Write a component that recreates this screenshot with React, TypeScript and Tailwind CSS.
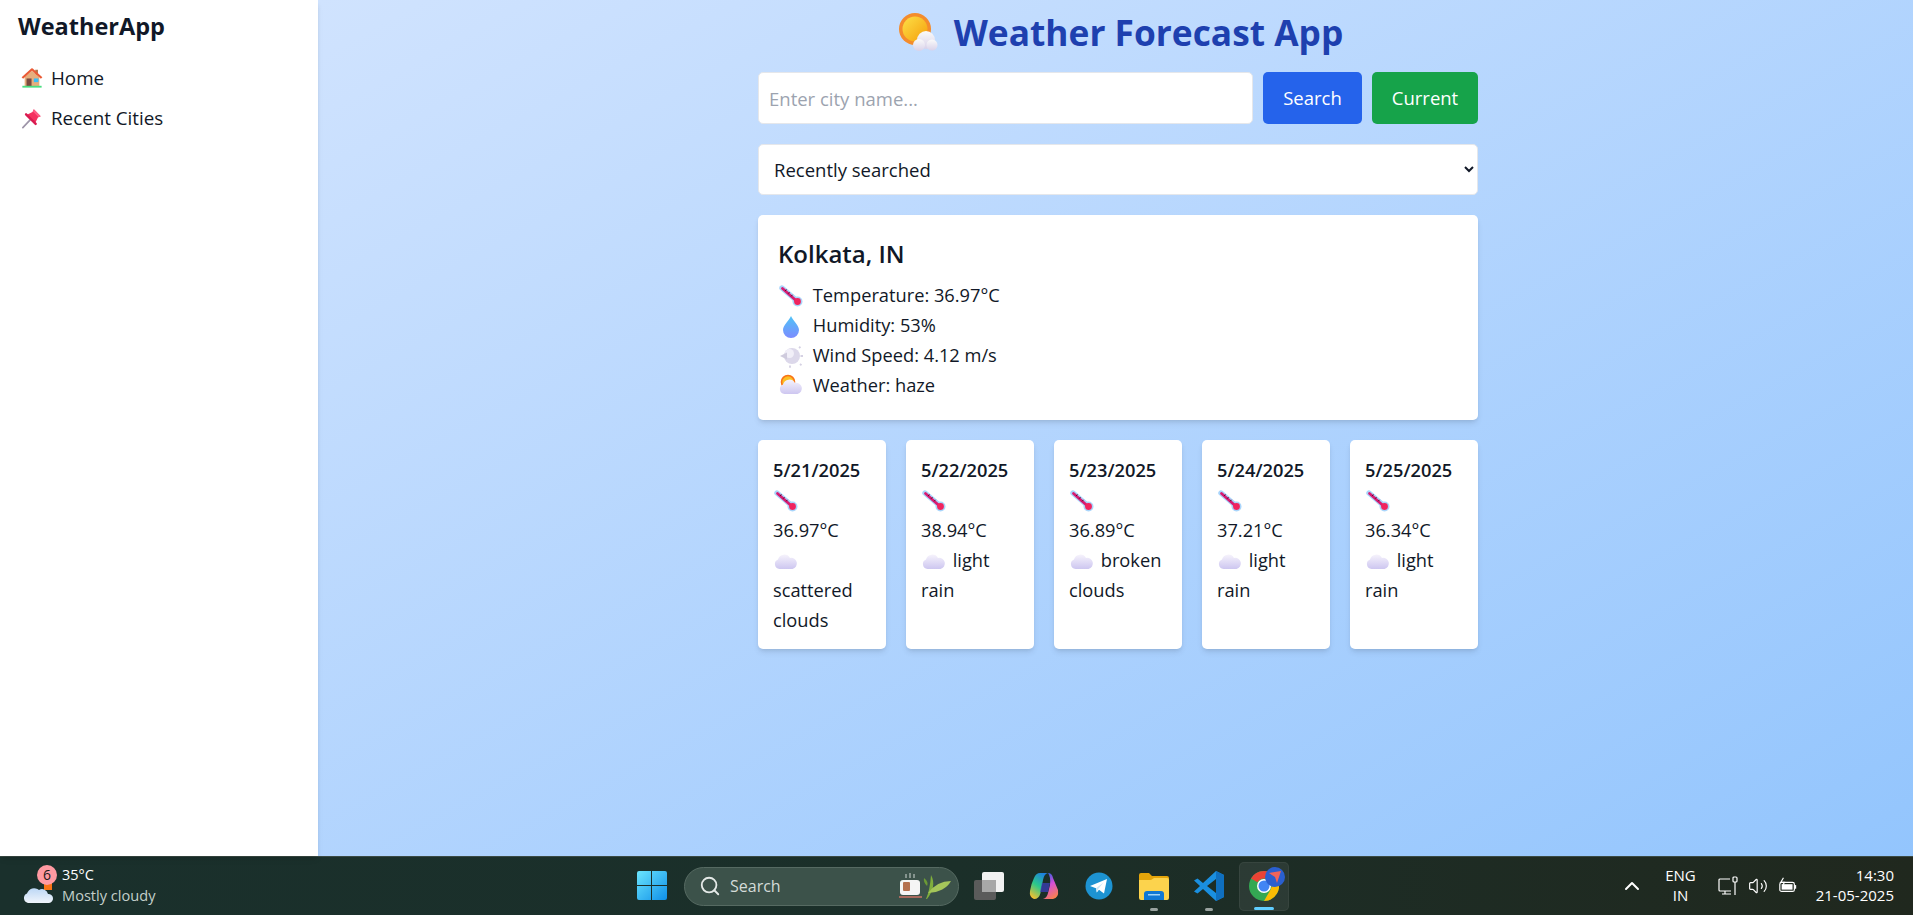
import React from 'react';
import { ChevronUp, Search, Volume2 } from 'lucide-react';

const emojiBox = 'inline-block w-[26px] h-[26px] align-[-7px] mr-[1px]';

const Thermometer = () => (
  <svg viewBox="0 0 26 26" className={emojiBox}>
    <path d="M4 5 L18 17" stroke="#a9d5fb" strokeWidth="5.4" strokeLinecap="round" />
    <circle cx="19.5" cy="18.5" r="5" fill="#a9d5fb" />
    <path d="M4.5 5.5 L18 17.5" stroke="#d81b72" strokeWidth="2.8" strokeLinecap="round" />
    <circle cx="19.5" cy="18.5" r="3.4" fill="#f0245f" />
    <path d="M8.5 6.5l-1.4 1.5M11.5 9.2l-1.4 1.5M14.5 11.8l-1.4 1.5" stroke="#4a1030" strokeWidth="1" />
  </svg>
);

const Droplet = () => (
  <svg viewBox="0 0 26 26" className={emojiBox}>
    <defs>
      <linearGradient id="drop" x1="0" y1="0" x2="0" y2="1">
        <stop offset="0" stopColor="#4fc3f7" />
        <stop offset="1" stopColor="#7c8cff" />
      </linearGradient>
    </defs>
    <path d="M13 3 C15 8 21 12 21 17 A8 8 0 0 1 5 17 C5 12 11 8 13 3Z" fill="url(#drop)" />
  </svg>
);

const Wind = () => (
  <svg viewBox="0 0 26 26" className={emojiBox}>
    <circle cx="14" cy="13" r="8" fill="#dcd8ea" />
    <circle cx="11.5" cy="10.5" r="4.5" fill="#f1eff8" />
    <path d="M2 13 L9 9.5 L9 16.5Z" fill="#cfcbdd" />
    <path d="M21 5l1.5-1.2M22 21l1.5 1.2M12 22.5v2.2M22.5 13h2.5" stroke="#d5d1e3" strokeWidth="1.8" />
  </svg>
);

const SmallCloud = ({ sun }: { sun?: boolean }) => (
  <svg viewBox="0 0 26 26" className={emojiBox}>
    <defs>
      <linearGradient id={sun ? 'cl1' : 'cl2'} x1="0" y1="0" x2="0" y2="1">
        <stop offset="0" stopColor="#f6f3fc" />
        <stop offset="1" stopColor="#cdc6f0" />
      </linearGradient>
    </defs>
    {sun && <circle cx="10" cy="9" r="6.5" fill="#fbbf24" stroke="#f97316" strokeWidth="1.6" />}
    <path
      d="M6.5 21 A5 5 0 0 1 5 11.4 A6.5 6.5 0 0 1 17 10 A5.6 5.6 0 0 1 19.5 21Z"
      fill={`url(#${sun ? 'cl1' : 'cl2'})`}
    />
  </svg>
);

const House = () => (
  <svg viewBox="0 0 24 24" className="w-[22px] h-[22px]">
    <rect x="15.5" y="3" width="3" height="6" fill="#b4764a" />
    <path d="M4 11 L12 4 L20 11 V21 H4Z" fill="#e6ae7c" />
    <path d="M1.5 12 L12 2.5 L22.5 12" fill="none" stroke="#ea5a34" strokeWidth="2.4" strokeLinejoin="round" />
    <rect x="6" y="12.5" width="5.5" height="8.5" fill="#7a4a3f" />
    <rect x="14" y="12.5" width="5" height="4" fill="#38bdf8" />
    <rect x="1.5" y="20.5" width="21" height="2" fill="#4ade80" />
  </svg>
);

const Pin = () => (
  <svg viewBox="0 0 24 24" className="w-[22px] h-[22px]">
    <path d="M2 22.5 L10 14" stroke="#9d94a8" strokeWidth="1.8" strokeLinecap="round" />
    <path d="M14 2.5 L21.5 10 L18.5 11.5 L15.5 17.5 L6.5 8.5 L12.5 5.5Z" fill="#f4305f" />
    <path d="M14 2.5 L21.5 10 L19 11 L13 5Z" fill="#ff5c85" />
    <path d="M5.5 8 L16 18.5" stroke="#d81b50" strokeWidth="2.6" strokeLinecap="round" />
  </svg>
);

const TitleIcon = () => (
  <svg viewBox="0 0 40 40" className="w-10 h-10 inline-block">
    <defs>
      <linearGradient id="sunFill" x1="0" y1="0" x2="1" y2="1">
        <stop offset="0" stopColor="#fde047" />
        <stop offset="1" stopColor="#f59e0b" />
      </linearGradient>
      <linearGradient id="titleCloud" x1="0" y1="0" x2="0" y2="1">
        <stop offset="0" stopColor="#fafafa" />
        <stop offset="1" stopColor="#d9d2ea" />
      </linearGradient>
    </defs>
    <circle cx="17" cy="17" r="16" fill="#f48c2c" />
    <circle cx="17" cy="17" r="12.5" fill="url(#sunFill)" />
    <circle cx="28" cy="28" r="9" fill="url(#titleCloud)" />
    <circle cx="21" cy="33" r="6" fill="url(#titleCloud)" />
    <circle cx="34" cy="33" r="5.5" fill="url(#titleCloud)" />
  </svg>
);

const forecast = [
  { date: '5/21/2025', temp: '36.97°C', desc: 'scattered clouds' },
  { date: '5/22/2025', temp: '38.94°C', desc: 'light rain' },
  { date: '5/23/2025', temp: '36.89°C', desc: 'broken clouds' },
  { date: '5/24/2025', temp: '37.21°C', desc: 'light rain' },
  { date: '5/25/2025', temp: '36.34°C', desc: 'light rain' },
];

const Sidebar = () => (
  <aside className="w-[318px] shrink-0 bg-white shadow-md px-[18px] py-[8px] text-[#111827] z-10">
    <h2 className="text-[23.5px] leading-[36px] font-bold mb-[19px]">WeatherApp</h2>
    <ul className="text-[18.8px] leading-[30px] flex flex-col gap-[10px]">
      <li className="flex items-center gap-2 pl-[3px]"><House /> Home</li>
      <li className="flex items-center gap-2 pl-[3px]"><Pin /> Recent Cities</li>
    </ul>
  </aside>
);

const Main = () => (
  <main className="flex-1 bg-gradient-to-br from-[#d0e3fe] to-[#93c5fd] pt-[12px] flex flex-col items-center pl-[5px]">
    <div className="w-[720px] text-[#111827]">
      <h1 className="h-10 flex items-center justify-center gap-4 pl-[5px] text-[35.3px] leading-10 font-bold text-[#1e40af] mb-[20px]">
        <TitleIcon /> Weather Forecast App
      </h1>
      <div className="flex gap-[10px] mb-[20px]">
        <input
          placeholder="Enter city name..."
          className="flex-1 min-w-0 h-[52px] bg-white rounded-[5px] border border-[#e5e7eb] px-[10px] text-[18.5px] placeholder:text-[#9ca3af] outline-none"
        />
        <button className="w-[99px] h-[52px] bg-[#2563eb] text-white text-[18.5px] rounded-[5px]">Search</button>
        <button className="w-[106px] h-[52px] bg-[#16a34a] text-white text-[18.5px] rounded-[5px]">Current</button>
      </div>
      <select className="block w-full h-[51px] bg-white rounded-[5px] border border-[#e5e7eb] pl-[11px] text-[18.5px] mb-[20px] outline-none">
        <option>Recently searched</option>
      </select>
      <section className="bg-white rounded-[5px] shadow-md h-[205px] px-[20px] pt-[21px] mb-[20px]">
        <h3 className="text-[24px] leading-[36px] font-semibold mb-[8px]">Kolkata, IN</h3>
        <div className="text-[18.25px] leading-[30px]">
          <p><Thermometer />&nbsp;&thinsp;Temperature: 36.97°C</p>
          <p><Droplet />&nbsp;&thinsp;Humidity: 53%</p>
          <p><Wind />&nbsp;&thinsp;Wind Speed: 4.12 m/s</p>
          <p><SmallCloud sun />&nbsp;&thinsp;Weather: haze</p>
        </div>
      </section>
      <div className="grid grid-cols-5 gap-5">
        {forecast.map((day) => (
          <div key={day.date} className="bg-white rounded-[5px] shadow-md h-[209px] pl-[15px] pr-4 pt-[15px] text-[18.25px] leading-[30px]">
            <p className="font-semibold">{day.date}</p>
            <p><Thermometer /> {day.temp}</p>
            <p><SmallCloud /> {day.desc}</p>
          </div>
        ))}
      </div>
    </div>
  </main>
);

const WeatherWidget = () => (
  <div className="w-[627px] shrink-0 flex items-center pl-[22px]">
    <div className="relative w-[32px] h-[40px] mr-[8px]">
      <svg viewBox="0 0 32 40" className="w-[32px] h-[40px]">
        <defs>
          <linearGradient id="tbCloud" x1="0" y1="0" x2="0" y2="1">
            <stop offset="0" stopColor="#bcd7f5" />
            <stop offset="1" stopColor="#f0f5fc" />
          </linearGradient>
        </defs>
        <rect x="22" y="16" width="8" height="8" fill="#f97316" />
        <path d="M6 37 A5 5 0 0 1 5 27.5 A7.5 7.5 0 0 1 17 24 A6 6 0 0 1 26 28 A4.5 4.5 0 0 1 27 37Z" fill="url(#tbCloud)" />
      </svg>
      <span className="absolute top-[-1px] right-[-3px] w-5 h-5 rounded-full bg-[#ff9aa2] text-[#1a1a1a] text-[14px] leading-5 text-center">6</span>
    </div>
    <div className="leading-[20px] pb-[2px]">
      <div className="text-[14.5px] text-white">35°C</div>
      <div className="text-[14.6px] text-[#c3cfca]">Mostly cloudy</div>
    </div>
  </div>
);

const WinLogo = () => (
  <svg viewBox="0 0 30 30" className="w-[30px] h-[30px]">
    <defs>
      <linearGradient id="win" x1="0" y1="0" x2="1" y2="1">
        <stop offset="0" stopColor="#6be5fd" />
        <stop offset="1" stopColor="#0f8fe8" />
      </linearGradient>
    </defs>
    <path d="M2 0h12v14H0V2a2 2 0 0 1 2-2zM15 0h13a2 2 0 0 1 2 2v12H15zM0 15h14v14H2a2 2 0 0 1-2-2zM15 15h15v12a2 2 0 0 1-2 2H15z" fill="url(#win)" />
  </svg>
);

const TaskView = () => (
  <svg viewBox="0 0 30 28" className="w-[30px] h-[28px]">
    <rect x="0" y="8" width="22" height="20" rx="2" fill="#5b5b5b" />
    <rect x="8" y="0" width="22" height="20" rx="2" fill="#f2f2f2" />
    <rect x="8" y="8" width="14" height="12" fill="#a8a8a8" />
  </svg>
);

const Copilot = () => (
  <svg viewBox="0 0 30 28" className="w-[30px] h-[28px]">
    <defs>
      <linearGradient id="copA" x1="0.7" y1="0" x2="0.2" y2="1">
        <stop offset="0" stopColor="#1d7fe0" />
        <stop offset="0.5" stopColor="#2cc98a" />
        <stop offset="1" stopColor="#fbc02d" />
      </linearGradient>
      <linearGradient id="copB" x1="0.3" y1="0" x2="0.7" y2="1">
        <stop offset="0" stopColor="#2f5fe0" />
        <stop offset="0.45" stopColor="#d64fd8" />
        <stop offset="1" stopColor="#f9824a" />
      </linearGradient>
    </defs>
    <path d="M11 1 H19 Q15 2 14 8 L11.5 21 Q10 27 5 27 Q0 25 1 19 Q2 12 5 6 Q7 1 11 1Z" fill="url(#copA)" />
    <path d="M19 1 Q23 1 24 6 L29 18 Q30 26 24 27 H14 Q18 26 19 21 L21 13 Q22 5 19 1Z" fill="url(#copB)" />
    <path d="M13 11 H21 L19 20 H11Z" fill="#3b3fb8" opacity="0.75" />
  </svg>
);

const Telegram = () => (
  <svg viewBox="0 0 28 28" className="w-[28px] h-[28px]">
    <circle cx="14" cy="14" r="13.5" fill="#1d93d2" />
    <path d="M5 14 L22 7 L19 21.5 L14 17.8 L11.8 20.5 L11 16.2 Z" fill="#fff" />
    <path d="M11 16.2 L18.5 10.5 L13 17.2 L11.8 20.5Z" fill="#cbe6f5" />
  </svg>
);

const Folder = () => (
  <svg viewBox="0 0 30 28" className="w-[30px] h-[28px]">
    <path d="M0 3a2 2 0 0 1 2-2h8l3 3h15a2 2 0 0 1 2 2v6H0z" fill="#e5a50a" />
    <path d="M0 8h12l3-2h13a2 2 0 0 1 2 2v18a2 2 0 0 1-2 2H2a2 2 0 0 1-2-2z" fill="#fcd34d" />
    <path d="M5 22a3 3 0 0 1 3-3h14a3 3 0 0 1 3 3v6H5z" fill="#0f78d4" />
    <rect x="9" y="22" width="12" height="1.5" fill="#9fd4f7" />
  </svg>
);

const VSCode = () => (
  <svg viewBox="0 0 30 30" className="w-[30px] h-[30px]">
    <path d="M22 0 L30 4 V26 L22 30 L9 18 L3.5 22.5 L0 20.5 L6 15 L0 9.5 L3.5 7.5 L9 12Z M22 8 L13 15 L22 22Z" fill="#1a8fe0" fillRule="evenodd" />
    <path d="M22 0 L30 4 V26 L22 30Z M22 8 V22 L22 22" fill="#0f6fbf" />
  </svg>
);

const Chrome = () => (
  <div className="relative w-[50px] h-[49px] rounded-[5px] bg-white/7 border border-white/5 flex items-center justify-center">
    <svg viewBox="0 0 30 30" className="w-[30px] h-[30px]">
      <circle cx="15" cy="15" r="15" fill="#34a853" />
      <path d="M15 0A15 15 0 0 1 28 7.5H15A7.5 7.5 0 0 0 8.5 11.2L2 7.5A15 15 0 0 1 15 0Z" fill="#ea4335" />
      <path d="M28 7.5A15 15 0 0 1 15 30L21.5 18.7A7.5 7.5 0 0 0 21.5 11Z" fill="#fbbc04" />
      <circle cx="15" cy="15" r="7" fill="#fff" />
      <circle cx="15" cy="15" r="5.5" fill="#4285f4" />
    </svg>
    <span className="absolute top-[4px] right-[3px] w-5 h-5 rounded-full bg-[#2a5fd0] flex items-center justify-center">
      <svg viewBox="0 0 12 12" className="w-3 h-3"><path d="M0 2 L12 0 L8 12 L6 6Z" fill="#f0645a" /></svg>
    </span>
    <span className="absolute bottom-0 left-[14px] w-5 h-[3px] rounded-full bg-[#60cdff]" />
  </div>
);

const Slot = ({ children, dot }: { children: React.ReactNode; dot?: boolean }) => (
  <div className="relative w-[50px] h-[49px] flex items-center justify-center">
    {children}
    {dot && <span className="absolute bottom-0 left-[21px] w-2 h-[3px] rounded-full bg-[#9aa3a0]" />}
  </div>
);

const TeaLeaf = () => (
  <svg viewBox="0 0 54 28" className="w-[54px] h-[28px]">
    <path d="M7 2v4M11 1v5M15 2v4" stroke="#cfd6d3" strokeWidth="1" />
    <rect x="1" y="8" width="20" height="15" rx="3" fill="#f5f5f5" />
    <rect x="4" y="10" width="7" height="9" rx="1" fill="#b5714f" />
    <rect x="0" y="24" width="23" height="2" fill="#a86a5e" />
    <path d="M27 27 Q31 18 32 3 Q38 14 28 27Z" fill="#7fae3c" />
    <path d="M29 21 Q38 9 52 9 Q46 20 29 21Z" fill="#a5c65a" />
    <path d="M28 14 Q24 10 25 6 Q30 10 28 14Z" fill="#6b9a35" />
  </svg>
);

const SearchPill = () => (
  <div className="w-[275px] h-[39px] rounded-full bg-[#3c524a] border border-[#566a62] flex items-center pl-[14px] pr-[5px] text-[#d3dbd8] text-[16px]">
    <Search size={22} strokeWidth={2} className="text-[#e4e9e7]" />
    <span className="ml-[9px]">Search</span>
    <span className="ml-auto"><TeaLeaf /></span>
  </div>
);

const Tray = () => (
  <div className="ml-auto flex items-center pr-[19px] text-white text-[15px] leading-[20px]">
    <ChevronUp size={24} strokeWidth={2} className="mr-[21px]" />
    <div className="text-center mr-[22px] pb-[2px]">
      <div>ENG</div>
      <div>IN</div>
    </div>
    <svg viewBox="0 0 20 20" className="w-5 h-5 mr-[10px]" fill="none" stroke="#fff" strokeWidth="1.2">
      <path d="M12 3H2a1 1 0 0 0-1 1v10a1 1 0 0 0 1 1h11M7 15v3M4 18h9" />
      <rect x="15" y="1" width="4" height="5" rx="1" />
      <path d="M17 6v13" />
    </svg>
    <Volume2 size={20} strokeWidth={1.4} className="mr-[10px]" />
    <svg viewBox="0 0 22 20" className="w-5 h-5 mr-[18px]" fill="none" stroke="#fff" strokeWidth="1.3">
      <rect x="2" y="6" width="16" height="10" rx="2" />
      <rect x="4" y="8" width="12" height="6" fill="#fff" stroke="none" />
      <path d="M19 9v4" strokeWidth="2" />
      <path d="M6 1L3 6h4L5 10" />
    </svg>
    <div className="text-right pb-[2px]">
      <div>14:30</div>
      <div>21-05-2025</div>
    </div>
  </div>
);

const Taskbar = () => (
  <footer className="h-[59px] shrink-0 bg-gradient-to-r from-[#1a302c] via-[#1b2f29] to-[#20281e] border-t border-[#3a4a44] flex items-center [font-family:'Open_Sans',sans-serif]">
    <WeatherWidget />
    <div className="flex items-center gap-[5px]">
      <div className="mr-[2px]"><Slot><WinLogo /></Slot></div>
      <SearchPill />
      <Slot><TaskView /></Slot>
      <Slot><Copilot /></Slot>
      <Slot><Telegram /></Slot>
      <Slot dot><Folder /></Slot>
      <Slot dot><VSCode /></Slot>
      <Chrome />
    </div>
    <Tray />
  </footer>
);

export default function App() {
  return (
    <div className="h-screen flex flex-col overflow-hidden [font-family:'Open_Sans',sans-serif]">
      <div className="flex-1 min-h-0 flex">
        <Sidebar />
        <Main />
      </div>
      <Taskbar />
    </div>
  );
}
